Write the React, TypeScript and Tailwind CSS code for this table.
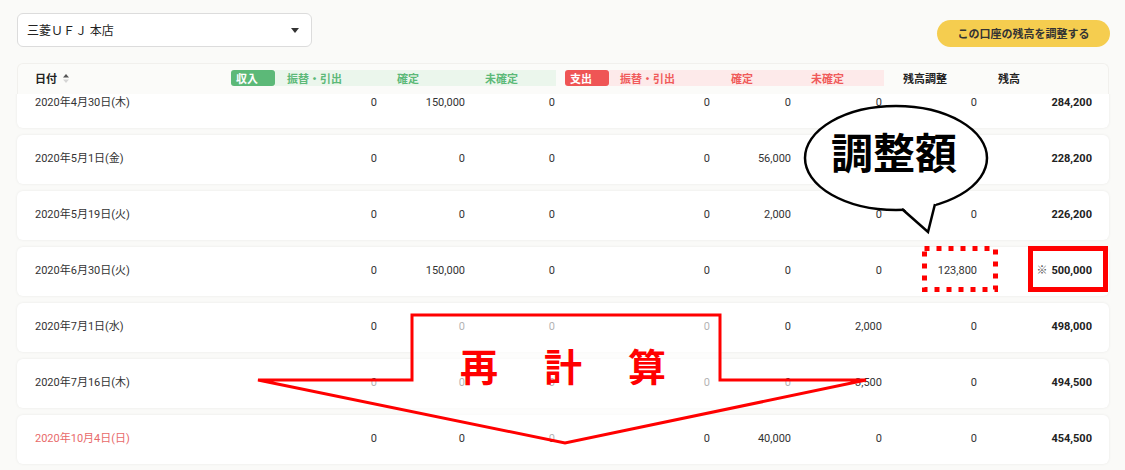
import React from "react";

const FONT = { fontFamily: "Roboto, 'Noto Sans CJK JP', 'Noto Sans', sans-serif" };
const CJK = { fontFamily: "'Noto Sans CJK JP', 'Noto Sans', sans-serif" };

type Row = {
  date: string;
  red?: boolean;
  v: string[];
  bal: string;
  mark?: boolean;
};

const rows: Row[] = [
  { date: "2020年4月30日(木)", v: ["0", "150,000", "0", "0", "0", "0", "0"], bal: "284,200" },
  { date: "2020年5月1日(金)", v: ["0", "0", "0", "0", "56,000", "0", "0"], bal: "228,200" },
  { date: "2020年5月19日(火)", v: ["0", "0", "0", "0", "2,000", "0", "0"], bal: "226,200" },
  { date: "2020年6月30日(火)", v: ["0", "150,000", "0", "0", "0", "0", "123,800"], bal: "500,000", mark: true },
  { date: "2020年7月1日(水)", v: ["0", "0", "0", "0", "0", "2,000", "0"], bal: "498,000" },
  { date: "2020年7月16日(木)", v: ["0", "0", "0", "0", "0", "3,500", "0"], bal: "494,500" },
  { date: "2020年10月4日(日)", red: true, v: ["0", "0", "0", "0", "40,000", "0", "0"], bal: "454,500" },
];

function DataRow({ r }: { r: Row }) {
  return (
    <div className="grid grid-cols-[282px_60px_88px_90px_155px_81px_91px_95px_115px] items-center h-[49px] bg-white rounded-md pl-[18px] pr-[17px] shadow-[0_0_3px_rgba(0,0,0,0.07)] text-[11px] text-[#333]">
      <div className={r.red ? "text-[#e86a6a]" : "text-[#333]"}>{r.date}</div>
      {r.v.map((x, i) => (
        <div key={i} className="text-right">
          {x}
        </div>
      ))}
      <div className="text-right font-bold text-[#222]">
        {r.mark && <span className="font-normal text-[#555] mr-[4px]">※</span>}
        {r.bal}
      </div>
    </div>
  );
}

export default function App() {
  return (
    <div className="relative w-[1125px] h-[470px] overflow-hidden bg-[#fafaf8]" style={FONT}>
      {/* top bar */}
      <div className="flex justify-between items-start pt-[13px] pl-[17px] pr-[15px]">
        <div className="w-[295px] h-[34px] bg-white border border-[#dcdcdc] rounded-md flex items-center justify-between pl-[9px] pr-[12px]">
          <span className="text-[12px] text-[#222]" style={CJK}>三菱ＵＦＪ 本店</span>
          <svg width="8" height="5" viewBox="0 0 8 5">
            <polygon points="0,0 8,0 4,5" fill="#333" />
          </svg>
        </div>
        <div className="mt-[7px] h-[27px] w-[173px] rounded-full bg-[#f5cd4f] flex items-center justify-center text-[11px] font-bold text-[#333]" style={CJK}>
          この口座の残高を調整する
        </div>
      </div>

      {/* header */}
      <div className="mt-[16px] ml-[17px] w-[1092px] h-[31px] pt-[6px] flex items-start text-[11px] font-bold bg-[#fbfbf9] rounded-t-md border-t border-x border-[#f1f0ed]" style={CJK}>
        <div className="w-[213px] pl-[17px] h-[16px] flex items-center gap-[6px] text-[#222]">
          日付
          <svg width="6" height="9" viewBox="0 0 6 9">
            <polygon points="0,3.5 6,3.5 3,0" fill="#555" />
            <polygon points="0,5.5 6,5.5 3,9" fill="#d5d5d5" />
          </svg>
        </div>
        <div className="w-[44px] h-[16px] rounded-[3px] bg-[#5cb978] text-white pl-[5px] flex items-center">収入</div>
        <div className="w-[281px] h-[16px] bg-[#ebf6ec] flex items-center text-[#5cb978]">
          <div className="w-[110px] pl-[12px]">振替・引出</div>
          <div className="w-[88px] pl-[12px]">確定</div>
          <div className="flex-1 pl-[12px]">未確定</div>
        </div>
        <div className="ml-[9px] w-[44px] h-[16px] rounded-[3px] bg-[#ef5555] text-white pl-[5px] flex items-center">支出</div>
        <div className="w-[275px] h-[16px] bg-[#fdeaea] flex items-center text-[#f05a5a]">
          <div className="w-[110px] pl-[11px]">振替・引出</div>
          <div className="w-[80px] pl-[12px]">確定</div>
          <div className="flex-1 pl-[12px]">未確定</div>
        </div>
        <div className="ml-[19px] w-[95px] h-[16px] flex items-center text-[#222]">残高調整</div>
        <div className="h-[16px] flex items-center text-[#222]">残高</div>
      </div>

      {/* rows */}
      <div className="h-[376px] overflow-hidden">
        <div className="-mt-[15px] ml-[17px] w-[1092px] flex flex-col gap-[7px]">
          {rows.map((r, i) => (
            <DataRow key={i} r={r} />
          ))}
        </div>
      </div>

      {/* annotations */}
      <svg className="absolute inset-0 pointer-events-none" width="1125" height="470" viewBox="0 0 1125 470">
        <polygon
          points="412,315 720,315 720,380 866,380 565,443 258,380 412,380"
          fill="rgba(255,255,255,0.62)"
          stroke="#ff0000"
          strokeWidth="3"
          strokeLinejoin="miter"
        />
        <ellipse cx="896" cy="158" rx="91" ry="52" fill="#fff" stroke="#000" strokeWidth="2.5" />
        <polygon points="900,205 928,232 937,200" fill="#fff" />
        <polyline points="902,209 928,232 935,204" fill="none" stroke="#000" strokeWidth="2.5" strokeLinejoin="miter" />
        <rect x="924.5" y="248.5" width="71" height="41" fill="none" stroke="#ff0000" strokeWidth="5" strokeDasharray="5 7" />
        <rect x="1030.5" y="248.5" width="75" height="41" fill="none" stroke="#ff0000" strokeWidth="5" />
      </svg>

      <div className="absolute left-[831px] top-[130px] text-[42px] leading-none font-bold text-black whitespace-nowrap" style={CJK}>
        調整額
      </div>
      <div className="absolute left-[460px] top-[346px] flex gap-[46px] text-[38px] leading-none font-bold text-[#ff0000]" style={CJK}>
        <span>再</span>
        <span>計</span>
        <span>算</span>
      </div>
    </div>
  );
}
